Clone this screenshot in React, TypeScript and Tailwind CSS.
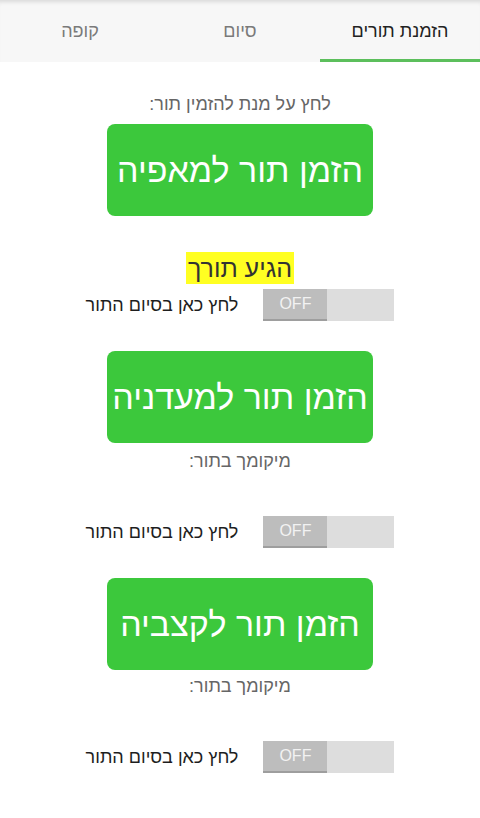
import React from 'react';

const tabs = ['הזמנת תורים', 'סיום', 'קופה'];

function Toggle() {
  return (
    <div dir="ltr" className="flex h-[32px] w-[131px] bg-[#dddddd]">
      <div className="flex h-full w-[64px] items-center justify-center border-b-2 border-[#9e9e9e] bg-[#bdbdbd] text-[16px] text-[#f2f2f2]">
        OFF
      </div>
    </div>
  );
}

function DoneRow() {
  return (
    <div className="flex items-center gap-[25px]">
      <Toggle />
      <span className="text-[18px] text-[#1e1e1e]">לחץ כאן בסיום התור</span>
    </div>
  );
}

function BigButton({ label }: { label: string }) {
  return (
    <button className="flex h-[92px] w-[266px] items-center justify-center whitespace-nowrap rounded-[8px] bg-[#3cc83c] text-[34px] text-white">
      {label}
    </button>
  );
}

export default function App() {
  return (
    <div dir="rtl" className="min-h-[818px] w-[480px] bg-white font-['Liberation_Sans',sans-serif]">
      {/* Tabs */}
      <div className="grid h-[62px] grid-cols-3 bg-[#f7f7f7] shadow-[inset_0_5px_4px_-3px_rgba(0,0,0,0.12)]">
        {tabs.map((tab, i) => (
          <div
            key={tab}
            className={`flex items-center justify-center text-[18px] ${
              i === 0
                ? 'border-b-[3px] border-[#5cbf5c] pt-[3px] text-[#222222]'
                : 'text-[#7a7a7a]'
            }`}
          >
            {tab}
          </div>
        ))}
      </div>

      <div className="flex flex-col items-center">
        <p className="mt-[32px] text-[18px] leading-[20px] text-[#666666]">לחץ על מנת להזמין תור:</p>
        <div className="mt-[10px]">
          <BigButton label="הזמן תור למאפיה" />
        </div>

        <div className="mt-[36px] h-[32px] bg-[#ffff22] px-[2px] text-[25px] leading-[32px] text-[#333333]">
          הגיע תורך
        </div>
        <div className="mt-[5px]">
          <DoneRow />
        </div>

        <div className="mt-[30px]">
          <BigButton label="הזמן תור למעדניה" />
        </div>
        <p className="mt-[8px] text-[18px] leading-[20px] text-[#666666]">מיקומך בתור:</p>
        <div className="mt-[45px]">
          <DoneRow />
        </div>

        <div className="mt-[30px]">
          <BigButton label="הזמן תור לקצביה" />
        </div>
        <p className="mt-[6px] text-[18px] leading-[20px] text-[#666666]">מיקומך בתור:</p>
        <div className="mt-[45px]">
          <DoneRow />
        </div>
      </div>
    </div>
  );
}
